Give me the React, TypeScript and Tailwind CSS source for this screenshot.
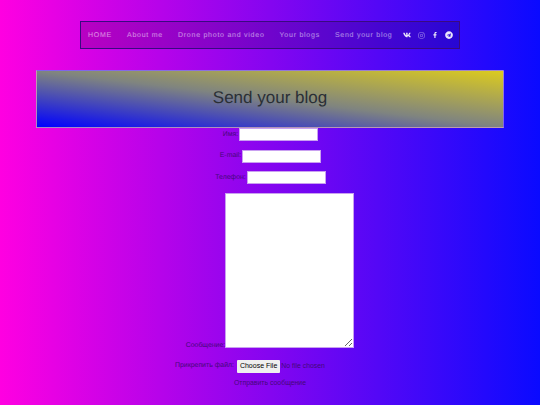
import { FaVk, FaInstagram, FaFacebookF, FaTelegram } from "react-icons/fa";

const links = ["HOME", "About me", "Drone photo and video", "Your blogs", "Send your blog"];

const fields = [
  { label: "Имя:", type: "text" },
  { label: "E-mail:", type: "email" },
  { label: "Телефон:", type: "tel" },
];

export default function App() {
  return (
    <div className="h-[405px] w-[540px] overflow-hidden bg-[linear-gradient(to_right,#ff00e1,#0a0aff)] font-['Liberation_Sans',Arial,sans-serif] [text-rendering:geometricPrecision]">
      {/* Nav */}
      <div className="flex justify-center pt-[21px]">
        <nav className="flex h-[28px] w-[380px] items-center border border-[#3a0a80] bg-black/15 pl-[7px]">
          <ul className="flex gap-[15px] whitespace-nowrap pt-[2px]">
            {links.map((link) => (
              <li key={link} className="text-[7px] font-light tracking-[0.75px] text-white/55">
                {link}
              </li>
            ))}
          </ul>
          <div className="ml-[11px] flex items-center gap-[7px] text-white/90">
            <FaVk className="h-[8px] w-[8px]" />
            <FaInstagram className="h-[7px] w-[7px] opacity-60" />
            <FaFacebookF className="h-[6px] w-[6px]" />
            <FaTelegram className="h-[8px] w-[8px]" />
          </div>
        </nav>
      </div>

      {/* Title */}
      <div className="mx-[36px] mt-[21px] flex h-[58px] items-center justify-center border border-[#b48ce6]/70 bg-[linear-gradient(to_top_right,#0000ff,#7f8480,#dccb1e)] pb-[2px]">
        <h1 className="text-[17px] text-[#2a2f36]">Send your blog</h1>
      </div>

      {/* Form */}
      <form className="flex flex-col items-center text-[6.9px] text-[#45087a]">
        {fields.map((field) => (
          <label key={field.label} className="mb-[8.5px] flex items-center gap-[1px] pl-[1px]">
            <span className="pt-[1px]">{field.label}</span>
            <input type={field.type} className="h-[13px] w-[79px] border border-[#c9a0f0] bg-white" />
          </label>
        ))}
        <label className="flex items-end">
          <span className="-mb-[4px]">Сообщение:</span>
          <textarea className="h-[155px] w-[129px] border border-[#c9a0f0] bg-white" />
        </label>
        <label className="mt-[12px] flex items-center gap-[3px]">
          <span className="pt-[1px]">Прикрепить файл:</span>
          <input
            type="file"
            className="w-[128px] text-[6.9px] file:mr-[1px] file:h-[13px] file:rounded-[1px] file:border-0 file:bg-[#efefef] file:px-[3px] file:text-[7px] file:text-black"
          />
        </label>
        <button type="button" className="mt-[4px] pt-[1px] text-[6.9px]">
          Отправить сообщение
        </button>
      </form>
    </div>
  );
}
